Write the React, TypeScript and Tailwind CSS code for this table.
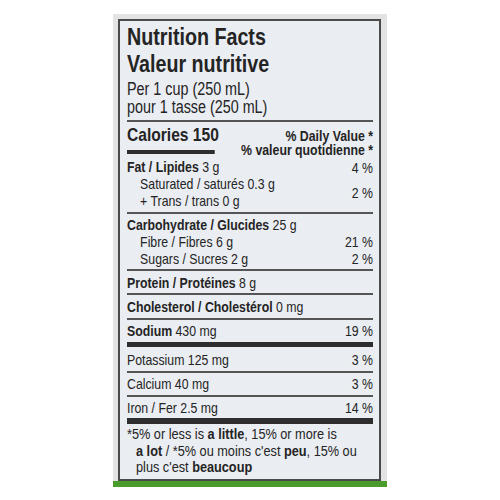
import React from "react";

function Line({
  children,
  right,
  indent = false,
  className = "",
}: {
  children: React.ReactNode;
  right?: React.ReactNode;
  indent?: boolean;
  className?: string;
}) {
  return (
    <div className={`flex justify-between h-[17px] leading-[17px] text-[15px] whitespace-nowrap ${className}`}>
      <span className={indent ? "pl-[16px]" : ""}>{children}</span>
      {right ? <span>{right}</span> : null}
    </div>
  );
}

function Rule({ className = "" }: { className?: string }) {
  return <div className={`h-[2px] bg-[#555555] ${className}`} />;
}

export default function App() {
  return (
    <div className="w-[500px] h-[500px] bg-white flex justify-center pt-[14px] [font-family:'Liberation_Sans',Arial,sans-serif] text-[#242424]">
      <div className="w-[274px] h-[473px] bg-[#e3e3e3] flex flex-col pt-[5px] pl-[5px]">
        <div className="w-[263px] h-[462px] border-2 border-[#4a4a4a] bg-[#eaedf2] pl-[7px] pr-[6px] overflow-hidden">
          <div className="w-[300px] origin-top-left scale-x-[0.82] flex flex-col">
            <div className="mt-[2px] h-[27px] leading-[27px] text-[24px] font-bold whitespace-nowrap">Nutrition Facts</div>
            <div className="h-[27px] leading-[27px] text-[24px] font-bold whitespace-nowrap">Valeur nutritive</div>
            <div className="mt-[3px] h-[18px] leading-[18px] text-[17.5px] whitespace-nowrap">Per 1 cup (250 mL)</div>
            <div className="h-[18px] leading-[18px] text-[17.5px] whitespace-nowrap">pour 1 tasse (250 mL)</div>
            <Rule className="mt-[4px]" />
            <div className="h-[36px] flex justify-between items-start">
              <div className="flex flex-col">
                <div className="mt-[2px] h-[22px] leading-[22px] text-[19px] font-bold whitespace-nowrap">Calories 150</div>
                <div className="mt-[4px] h-[4px] w-[107px] bg-[#2e2e2e]" />
              </div>
              <div className="flex flex-col items-end mt-[7px] text-[15px] font-bold">
                <div className="h-[14px] leading-[14px] whitespace-nowrap">% Daily Value *</div>
                <div className="h-[14px] leading-[14px] whitespace-nowrap">% valeur quotidienne *</div>
              </div>
            </div>
            <div className="flex justify-between">
              <div className="flex flex-col">
                <Line>
                  <b>Fat / Lipides</b> 3 g
                </Line>
                <Line indent>Saturated / saturés 0.3 g</Line>
                <Line indent>+ Trans / trans 0 g</Line>
              </div>
              <div className="flex flex-col items-end text-[15px]">
                <div className="h-[17px] leading-[17px] mt-[1px]">4 %</div>
                <div className="h-[17px] leading-[17px] mt-[8px]">2 %</div>
              </div>
            </div>
            <Rule className="mt-[3px]" />
            <div className="mt-[2px] flex flex-col">
              <Line>
                <b>Carbohydrate / Glucides</b> 25 g
              </Line>
              <Line indent right="21 %">
                Fibre / Fibres 6 g
              </Line>
              <Line indent right="2 %">
                Sugars / Sucres 2 g
              </Line>
            </div>
            <Rule className="mt-[2px]" />
            <Line className="mt-[3px]">
              <b>Protein / Protéines</b> 8 g
            </Line>
            <Rule className="mt-[2px]" />
            <Line className="mt-[3px]">
              <b>Cholesterol / Cholestérol</b> 0 mg
            </Line>
            <Rule className="mt-[3px]" />
            <Line className="mt-[2px]" right="19 %">
              <b>Sodium</b> 430 mg
            </Line>
            <div className="mt-[3px] h-[5px] bg-[#2e2e2e]" />
            <Line className="mt-[4px]" right="3 %">
              Potassium 125 mg
            </Line>
            <Rule className="mt-[3px]" />
            <Line className="mt-[2px]" right="3 %">
              Calcium 40 mg
            </Line>
            <Rule className="mt-[3px]" />
            <Line className="mt-[2px]" right="14 %">
              Iron / Fer 2.5 mg
            </Line>
            <div className="mt-[2px] h-[6px] bg-[#2e2e2e]" />
            <div className="mt-[2px] text-[15.5px] leading-[16.5px] whitespace-nowrap">
              <div>
                *5% or less is <b>a little</b>, 15% or more is
              </div>
              <div className="pl-[11px]">
                <b>a lot</b> / *5% ou moins c'est <b>peu</b>, 15% ou
              </div>
              <div className="pl-[11px]">
                plus c'est <b>beaucoup</b>
              </div>
            </div>
          </div>
        </div>
        <div className="-ml-[5px] w-[274px] h-[6px] bg-[#4a9c2d]" />
      </div>
    </div>
  );
}
